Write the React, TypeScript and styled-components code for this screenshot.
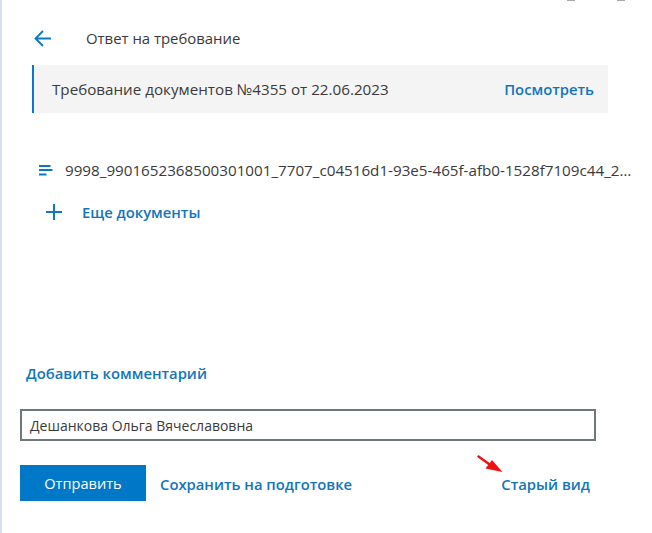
import React from 'react';
import styled, { createGlobalStyle } from 'styled-components';

const GlobalStyle = createGlobalStyle`
  html, body { margin: 0; padding: 0; background: #fff; }
  body { font-family: "Open Sans", "Noto Sans", sans-serif; color: #333; }
`;

const Page = styled.div`
  position: relative;
  width: 652px;
  height: 533px;
  box-sizing: border-box;
  border-left: 2px solid #d5e0f0;
  overflow: hidden;
`;

const TopMarks = styled.div`
  display: flex;
  justify-content: flex-end;
  gap: 42px;
  height: 1px;
  padding-right: 27px;
`;

const TopMark = styled.span<{ $w: number }>`
  width: ${(p) => p.$w}px;
  height: 1px;
  background: #a8a8a8;
`;

const Header = styled.header`
  display: flex;
  align-items: center;
  height: 24px;
  margin-top: 25px;
  padding-left: 32px;
`;

const BackButton = styled.span`
  display: flex;
  width: 52px;
  color: #0a78c2;
`;

const Title = styled.h1`
  margin: 0;
  font-size: 14.9px;
  font-weight: 400;
  color: #3a3a3a;
`;

const Banner = styled.div`
  display: flex;
  align-items: center;
  justify-content: space-between;
  box-sizing: border-box;
  width: 576px;
  height: 48px;
  margin: 15px 0 0 30px;
  padding: 0 14px 0 18px;
  background: #f4f4f4;
  border-left: 2px solid #0a78c8;
`;

const BannerText = styled.span`
  font-size: 15.2px;
  color: #3a3a3a;
`;

const LinkText = styled.a`
  font-size: 14.8px;
  font-weight: 600;
  color: #1175bd;
  white-space: nowrap;
`;

const DocRow = styled.div`
  display: flex;
  align-items: center;
  gap: 12px;
  height: 24px;
  margin: 45px 0 0 37px;
`;

const DocName = styled.span`
  width: 570px;
  font-size: 15.2px;
  color: #3a3a3a;
  white-space: nowrap;
  overflow: hidden;
  text-overflow: ellipsis;
`;

const AddRow = styled.div`
  display: flex;
  align-items: center;
  gap: 20px;
  height: 24px;
  margin: 18px 0 0 44px;
`;

const CommentRow = styled.div`
  display: flex;
  align-items: center;
  height: 24px;
  margin: 137px 0 0 24px;
`;

const NameBox = styled.div`
  display: flex;
  align-items: center;
  box-sizing: border-box;
  width: 576px;
  height: 32px;
  margin: 24px 0 0 18px;
  padding: 0 8px;
  border: 2px solid #6f777b;
  font-size: 14px;
  color: #3a3a3a;
`;

const Footer = styled.div`
  display: flex;
  align-items: center;
  width: 570px;
  height: 36px;
  margin: 24px 0 0 18px;
`;

const SendButton = styled.button`
  width: 126px;
  height: 36px;
  margin-right: 14px;
  padding: 0;
  border: 0;
  background: #0078c8;
  color: #fff;
  font-family: inherit;
  font-size: 14.6px;
`;

const SaveLink = styled(LinkText)`
  margin-top: 2px;
`;

const OldView = styled(LinkText)`
  margin: 2px 0 0 auto;
`;

// red annotation arrow drawn over the screenshot
const Annotation = styled.svg`
  position: absolute;
  left: 472px;
  top: 452px;
`;

const BackIcon = () => (
  <svg width="17" height="17" viewBox="0 0 17 17" fill="none" stroke="currentColor" strokeWidth="1.8">
    <path d="M1.5 8.5H17M9 1 1.5 8.5 9 16" />
  </svg>
);

const DocIcon = () => (
  <svg width="14" height="11" viewBox="0 0 14 11" fill="#0a78c2">
    <rect x="0" y="0" width="11.5" height="2" />
    <rect x="0" y="4" width="13.5" height="2" />
    <rect x="0" y="8.5" width="7.5" height="2" />
  </svg>
);

const PlusIcon = () => (
  <svg width="16" height="16" viewBox="0 0 16 16" fill="#0a78c2">
    <rect x="0" y="7" width="16" height="2" />
    <rect x="7" y="0" width="2" height="16" />
  </svg>
);

export default function App() {
  return (
    <Page>
      <GlobalStyle />
      <TopMarks>
        <TopMark $w={8} />
        <TopMark $w={8} />
      </TopMarks>
      <Header>
        <BackButton>
          <BackIcon />
        </BackButton>
        <Title>Ответ на требование</Title>
      </Header>
      <Banner>
        <BannerText>Требование документов №4355 от 22.06.2023</BannerText>
        <LinkText>Посмотреть</LinkText>
      </Banner>
      <DocRow>
        <DocIcon />
        <DocName>9998_9901652368500301001_7707_c04516d1-93e5-465f-afb0-1528f7109c44_20230622_1234567.xml</DocName>
      </DocRow>
      <AddRow>
        <PlusIcon />
        <LinkText>Еще документы</LinkText>
      </AddRow>
      <CommentRow>
        <LinkText>Добавить комментарий</LinkText>
      </CommentRow>
      <NameBox>Дешанкова Ольга Вячеславовна</NameBox>
      <Footer>
        <SendButton>Отправить</SendButton>
        <SaveLink>Сохранить на подготовке</SaveLink>
        <OldView>Старый вид</OldView>
      </Footer>
      <Annotation width="32" height="24" viewBox="0 0 32 24">
        <path d="M4.5 4.5 15 12" stroke="#f01010" strokeWidth="2.4" strokeLinecap="round" />
        <path d="M28.5 20 11.5 16.5 18 8Z" fill="#f01010" />
      </Annotation>
    </Page>
  );
}
